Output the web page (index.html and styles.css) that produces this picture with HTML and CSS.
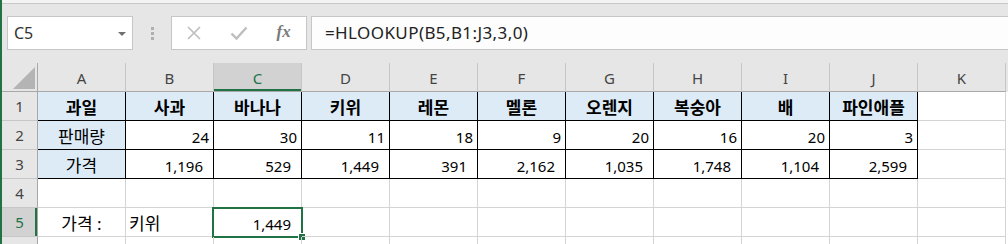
FILE: index.html
```html
<!DOCTYPE html>
<html lang="ko">
<head>
    <meta charset="UTF-8">
    <title>HLOOKUP</title>
    <link rel="stylesheet" href="styles.css">
</head>
<body>
    <div class="window">
        <div class="edge"></div>

        <div class="formula-bar">
            <div class="name-box">
                <span>C5</span>
                <svg class="arrow" width="8" height="4" viewBox="0 0 8 4"><path d="M0 0h8L4 4z" fill="#707070"/></svg>
            </div>
            <div class="grip"><i></i><i></i><i></i></div>
            <div class="fx-buttons">
                <span class="slot">
                    <svg width="16" height="16" viewBox="0 0 16 16"><path d="M2 2l12 12M14 2L2 14" stroke="#bdbdbd" stroke-width="1.6" fill="none"/></svg>
                </span>
                <span class="slot">
                    <svg width="18" height="16" viewBox="0 0 18 16"><path d="M1.5 8.5l5 5L16.5 2.5" stroke="#bdbdbd" stroke-width="2.4" fill="none"/></svg>
                </span>
                <span class="slot fx">fx</span>
            </div>
            <div class="formula-input">=HLOOKUP(B5,B1:J3,3,0)</div>
        </div>

        <div class="sheet">
            <div class="row head">
                <div class="rh corner"><svg width="22" height="22" viewBox="0 0 22 22"><path d="M22 0V22H0z" fill="#b4b4b4"/></svg></div>
                <div class="ch">A</div>
                <div class="ch">B</div>
                <div class="ch active">C</div>
                <div class="ch">D</div>
                <div class="ch">E</div>
                <div class="ch">F</div>
                <div class="ch">G</div>
                <div class="ch">H</div>
                <div class="ch">I</div>
                <div class="ch">J</div>
                <div class="ch">K</div>
            </div>

            <div class="row">
                <div class="rh">1</div>
                <div class="c t fill ko bold center">과일</div>
                <div class="c t fill ko bold center">사과</div>
                <div class="c t fill ko bold center">바나나</div>
                <div class="c t fill ko bold center">키위</div>
                <div class="c t fill ko bold center">레몬</div>
                <div class="c t fill ko bold center">멜론</div>
                <div class="c t fill ko bold center">오렌지</div>
                <div class="c t fill ko bold center">복숭아</div>
                <div class="c t fill ko bold center">배</div>
                <div class="c t fill ko bold center">파인애플</div>
                <div class="c"></div>
            </div>

            <div class="row">
                <div class="rh">2</div>
                <div class="c t fill ko center">판매량</div>
                <div class="c t num">24</div>
                <div class="c t num">30</div>
                <div class="c t num">11</div>
                <div class="c t num">18</div>
                <div class="c t num">9</div>
                <div class="c t num">20</div>
                <div class="c t num">16</div>
                <div class="c t num">20</div>
                <div class="c t num">3</div>
                <div class="c"></div>
            </div>

            <div class="row">
                <div class="rh">3</div>
                <div class="c t fill ko center">가격</div>
                <div class="c t num comma">1,196</div>
                <div class="c t num comma">529</div>
                <div class="c t num comma">1,449</div>
                <div class="c t num comma">391</div>
                <div class="c t num comma">2,162</div>
                <div class="c t num comma">1,035</div>
                <div class="c t num comma">1,748</div>
                <div class="c t num comma">1,104</div>
                <div class="c t num comma">2,599</div>
                <div class="c"></div>
            </div>

            <div class="row">
                <div class="rh">4</div>
                <div class="c"></div>
                <div class="c"></div>
                <div class="c"></div>
                <div class="c"></div>
                <div class="c"></div>
                <div class="c"></div>
                <div class="c"></div>
                <div class="c"></div>
                <div class="c"></div>
                <div class="c"></div>
                <div class="c"></div>
            </div>

            <div class="row">
                <div class="rh active">5</div>
                <div class="c ko center">가격 :</div>
                <div class="c ko left">키위</div>
                <div class="c num comma selected">1,449<span class="cursor"><span class="handle"></span></span></div>
                <div class="c"></div>
                <div class="c"></div>
                <div class="c"></div>
                <div class="c"></div>
                <div class="c"></div>
                <div class="c"></div>
                <div class="c"></div>
                <div class="c"></div>
            </div>

            <div class="row">
                <div class="rh"></div>
                <div class="c"></div>
                <div class="c"></div>
                <div class="c"></div>
                <div class="c"></div>
                <div class="c"></div>
                <div class="c"></div>
                <div class="c"></div>
                <div class="c"></div>
                <div class="c"></div>
                <div class="c"></div>
                <div class="c"></div>
            </div>
        </div>
    </div>
</body>
</html>
```

FILE: styles.css
```css
/* Excel-like sheet with a formula bar */
body {
    margin: 0;
    font-family: "Noto Sans", "Noto Sans CJK KR", sans-serif;
    background: #e6e6e6;
    color: #000;
}

.window {
    border-left: 2px solid #217346;
    height: 244px;
    overflow: hidden;
}

.edge {
    height: 3px;
    background: #f3f3f3;
    border-bottom: 1px solid #c8c8c8;
}

.formula-bar {
    height: 59px;
    box-sizing: border-box;
    padding-top: 12px;
    display: flex;
    align-items: flex-start;
}

.name-box {
    margin-left: 5px;
    width: 126px;
    height: 34px;
    box-sizing: border-box;
    border: 1px solid #c6c6c6;
    background: #fff;
    display: flex;
    align-items: center;
    justify-content: space-between;
    padding: 0 6px 0 6px;
    font-size: 16px;
    color: #333;
}

.name-box .arrow {
    margin-top: 1px;
}

.grip {
    margin-left: 18px;
    margin-top: 11px;
    width: 3px;
    display: flex;
    flex-direction: column;
    gap: 2px;
}

.grip i {
    display: block;
    width: 3px;
    height: 3px;
    background: #b0b0b0;
}

.fx-buttons {
    margin-left: 17px;
    width: 136px;
    height: 34px;
    box-sizing: border-box;
    border: 1px solid #c6c6c6;
    background: #fff;
    display: flex;
}

.slot {
    flex: 1;
    display: flex;
    align-items: center;
    justify-content: center;
}

.fx {
    font-family: "Liberation Serif", serif;
    font-style: italic;
    font-weight: bold;
    font-size: 17px;
    color: #7a7a7a;
    padding-bottom: 2px;
}

.formula-input {
    margin-left: 4px;
    flex: 1;
    height: 34px;
    box-sizing: border-box;
    border: 1px solid #c6c6c6;
    border-right: none;
    background: #fdfdfd;
    padding-left: 13px;
    font-size: 17px;
    letter-spacing: 0.4px;
    line-height: 32px;
    color: #222;
}

.sheet {
    background: #fff;
}

.row {
    display: flex;
    height: 29px;
}

.row.head {
    height: 29px;
    background: #e6e6e6;
}

.rh {
    width: 36px;
    flex: none;
    box-sizing: border-box;
    background: #e6e6e6;
    border-right: 1px solid #a8a8a8;
    border-bottom: 1px solid #c6c6c6;
    display: flex;
    align-items: center;
    justify-content: center;
    font-size: 15px;
    color: #444;
}

.rh.corner {
    border-bottom: 1px solid #a8a8a8;
    align-items: flex-end;
    justify-content: flex-end;
    padding: 0 2px 2px 0;
}

.rh.active {
    background: #d2d2d2;
    color: #217346;
    box-shadow: inset -2px 0 #217346;
}

.ch {
    width: 88px;
    flex: none;
    box-sizing: border-box;
    border-right: 1px solid #c6c6c6;
    border-bottom: 1px solid #a8a8a8;
    display: flex;
    align-items: center;
    justify-content: center;
    font-size: 15px;
    color: #444;
    padding-top: 1px;
}

.ch.active {
    background: #d2d2d2;
    color: #217346;
    box-shadow: inset 0 -2px #217346;
}

.c {
    width: 88px;
    flex: none;
    box-sizing: border-box;
    border-right: 1px solid #d4d4d4;
    border-bottom: 1px solid #d4d4d4;
    display: flex;
    align-items: center;
    font-size: 15px;
    padding-top: 3px;
    white-space: nowrap;
    position: relative;
}

.c.ko {
    font-size: 17px;
    padding-top: 1px;
}

.c.t {
    border-color: #000;
}

.fill {
    background: #ddebf7;
}

.bold {
    font-weight: bold;
}

.center {
    justify-content: center;
}

.left {
    padding-left: 3px;
}

.num {
    justify-content: flex-end;
    padding-right: 4px;
}

.num.comma {
    padding-right: 10px;
}

.cursor {
    position: absolute;
    left: -2px;
    top: -1px;
    width: 91px;
    height: 31px;
    box-sizing: border-box;
    border: 2px solid #217346;
}

.handle {
    position: absolute;
    right: -4px;
    bottom: -4px;
    width: 6px;
    height: 6px;
    background: #217346;
    outline: 1px solid #fff;
}
```
